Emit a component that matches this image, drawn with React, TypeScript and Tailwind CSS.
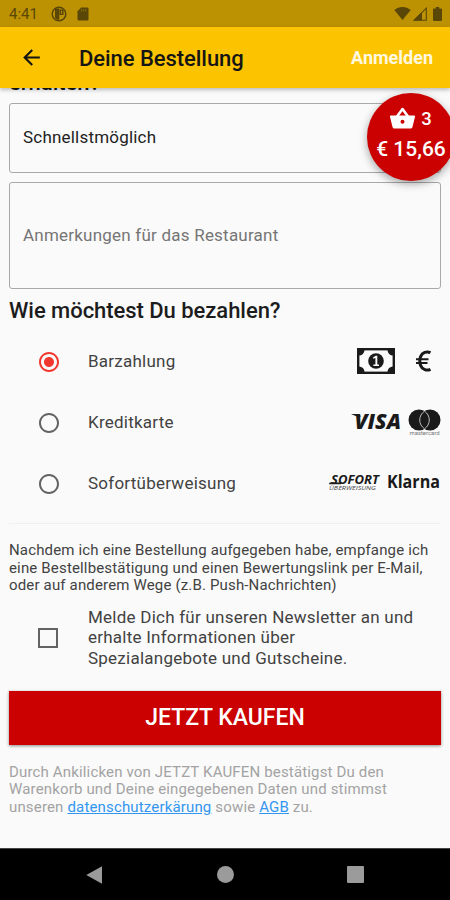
import { useState } from 'react'
import { MdArrowBack, MdRadioButtonChecked, MdRadioButtonUnchecked } from 'react-icons/md'

const PAYMENT_METHODS = [
  { id: 'cash', label: 'Barzahlung', logos: <CashLogos /> },
  { id: 'card', label: 'Kreditkarte', logos: <CardLogos /> },
  { id: 'sofort', label: 'Sofortüberweisung', logos: <SofortLogos /> },
]

function CashLogos() {
  return (
    <div className="-mt-[2px] flex items-center">
      <svg width="38" height="26" viewBox="0 0 38 26" className="mr-[21px]">
        <rect x="1.2" y="1.2" width="35.6" height="23.6" fill="none" stroke="#1a1a1a" strokeWidth="2.4" />
        <path d="M2 2h5.5a5.500 5.500 0 0 1-5.500 5.500zM36 2h-5.500a5.500 5.500 0 0 0 5.500 5.500zM2 24h5.500a5.500 5.500 0 0 0-5.500-5.500zM36 24h-5.500a5.500 5.500 0 0 1 5.500-5.500z" fill="#1a1a1a" />
        <circle cx="19" cy="13" r="7.800" fill="#1a1a1a" />
        <path d="M16.200 9.300l2.600-1.500h1.500v8.800h1.700v1.400h-5.600v-1.400h2v-6.600l-2.200.8z" fill="#fafafa" />
      </svg>
      <svg width="15" height="22" viewBox="0 0 15 22" className="mr-[10px]" fill="none" stroke="#1a1a1a">
        <path d="M14.500 2.800A7 7 0 0 0 4.700 6.400c-1.200 3-1.200 6.200 0 9.200A7 7 0 0 0 14.500 19.200" strokeWidth="3" />
        <path d="M0 9.200h12.500M0 13h11.500" strokeWidth="2" />
      </svg>
    </div>
  )
}

function CardLogos() {
  return (
    <div className="-mt-[2px] flex items-center gap-[5px]">
      <svg width="52" height="32" viewBox="0 0 52 32" fill="#1a1a1a">
        <path d="M0 8h8l2 2.500-3 .5z" />
        <text x="3.500" y="23" fontFamily="Open Sans, sans-serif" fontSize="21" fontWeight="800" fontStyle="italic" textLength="46.500" lengthAdjust="spacingAndGlyphs">
          VISA
        </text>
      </svg>
      <svg width="33" height="30" viewBox="0 0 33 30" className="mt-[3px]">
        <circle cx="11" cy="12" r="10.500" fill="#1a1a1a" />
        <circle cx="22" cy="12" r="10.500" fill="#1a1a1a" />
        <path d="M16.500 3.200a10.500 10.500 0 0 1 0 17.600a10.500 10.500 0 0 1 0-17.600z" fill="none" stroke="#bbb" strokeWidth="1" />
        <text x="1.500" y="26.500" fontFamily="Roboto, sans-serif" fontSize="5" fill="#777" textLength="30" lengthAdjust="spacingAndGlyphs">
          mastercard
        </text>
      </svg>
    </div>
  )
}

function SofortLogos() {
  return (
    <div className="-mt-[2px] flex items-center gap-[6px]">
      <svg width="53" height="26" viewBox="0 0 53 26" fill="#1a1a1a">
        <path d="M1.600 12.600h12l-.6 1.600H1z" />
        <text x="3" y="14.200" fontFamily="Open Sans, sans-serif" fontSize="12.500" fontWeight="700" fontStyle="italic" textLength="48" lengthAdjust="spacingAndGlyphs">
          SOFORT
        </text>
        <text x="1" y="20.300" fontFamily="Open Sans, sans-serif" fontSize="5" fontStyle="italic" fill="#444" textLength="47" lengthAdjust="spacingAndGlyphs">
          ÜBERWEISUNG
        </text>
      </svg>
      <svg width="54" height="34" viewBox="0 0 54 34" fill="#1a1a1a" className="-mt-[4px]">
        <text x="0" y="23.500" fontFamily="Open Sans, sans-serif" fontSize="18.500" fontWeight="700" textLength="53" lengthAdjust="spacingAndGlyphs">
          Klarna
        </text>
      </svg>
    </div>
  )
}

function StatusBar() {
  return (
    <div className="flex h-[27px] items-center justify-between bg-[#bd9202] pl-[9px] pr-[8px] text-[#5a4708]">
      <div className="flex items-center">
        <span className="mt-[2px] w-[42px] text-[15px]">4:41</span>
        <svg width="16" height="16" viewBox="0 0 16 16" className="mr-[10px]">
          <circle cx="8" cy="8" r="6.800" fill="none" stroke="currentColor" strokeWidth="1.500" />
          <path d="M4 2.500h4.300v11.300H6.500L4 12z" fill="currentColor" />
          <path d="M9.200 4.200h2.600v4H9.200z" fill="none" stroke="currentColor" strokeWidth="1.500" />
        </svg>
        <svg width="12" height="14" viewBox="0 0 12 14">
          <path d="M4.200.5h6.300a1 1 0 0 1 1 1v11a1 1 0 0 1-1 1h-9a1 1 0 0 1-1-1V4.200z" fill="currentColor" />
          <path d="M4.600 2.200v2.300M6.700 2.200v2.300M8.800 2.200v2.300" stroke="#bd9202" strokeWidth=".5" />
        </svg>
      </div>
      <div className="flex items-center">
        <svg width="17" height="14" viewBox="0 0 17 14" className="mr-[2px]">
          <path d="M8.500 13.500L.3 3.400a13 13 0 0 1 16.400 0z" fill="currentColor" transform="translate(0 -.5)" />
        </svg>
        <svg width="14" height="14" viewBox="0 0 14 14" className="mr-[6px]">
          <path d="M13.300 1.200v12H1z" fill="none" stroke="currentColor" strokeWidth="1.100" />
          <path d="M.3 13.600L9 5v8.600z" fill="currentColor" />
        </svg>
        <svg width="9" height="14" viewBox="0 0 9 14">
          <path d="M2.800 0h3.400v1.600H8a1 1 0 0 1 1 1V13a1 1 0 0 1-1 1H1a1 1 0 0 1-1-1V2.600a1 1 0 0 1 1-1h1.800z" fill="currentColor" />
        </svg>
      </div>
    </div>
  )
}

function NavigationBar() {
  return (
    <div className="flex h-[52px] items-center border-t border-[#444] bg-black pl-[86px] text-[#9b9b9b]">
      <svg width="16" height="18" viewBox="0 0 16 18">
        <path d="M16 .3v17.400L.3 9z" fill="currentColor" />
      </svg>
      <div className="ml-[115px] size-[17px] rounded-full bg-[#9b9b9b]" />
      <div className="ml-[113px] size-[17px] rounded-[1px] bg-[#9b9b9b]" />
    </div>
  )
}

export default function App() {
  const [payment, setPayment] = useState('cash')
  const [newsletter, setNewsletter] = useState(false)

  return (
    <div className="relative flex h-[900px] w-[450px] flex-col overflow-hidden bg-[#fafafa] font-[Roboto,sans-serif] text-[#222]">
      <StatusBar />

      <header className="z-10 flex h-[61px] items-center bg-[#fcc400] pl-[19px] pr-[17px] shadow-[0_2px_4px_rgba(0,0,0,0.25)]">
        <MdArrowBack className="size-[25px] text-[#151515]" />
        <h1 className="mt-[2px] ml-[35px] flex-1 text-[22px] font-medium tracking-[-0.05px] text-[#151515]">Deine Bestellung</h1>
        <button className="text-[18px] font-bold text-[#fff8e0]">Anmelden</button>
      </header>

      <main className="flex flex-1 flex-col overflow-hidden px-[9px] whitespace-nowrap">
        <h2 className="-mt-[18px] mb-[7px] h-[26px] shrink-0 text-[22px] leading-[26px] font-medium text-[#151515]">erhalten?</h2>

        <div className="flex h-[70px] items-center rounded-[3px] border border-[#a9a9a9] px-[13px] pb-px text-[17px] tracking-[0.2px]">
          Schnellstmöglich
        </div>
        <div className="mt-[9px] flex h-[107px] items-center rounded-[3px] border border-[#a9a9a9] px-[13px] text-[17px] tracking-[0.22px] text-[#757575]">
          Anmerkungen für das Restaurant
        </div>

        <h2 className="mt-[8px] text-[22px] leading-[27px] font-medium tracking-[-0.04px] text-[#1c1c1c]">Wie möchtest Du bezahlen?</h2>

        <div className="mt-[7px]">
          {PAYMENT_METHODS.map((m) => (
            <div className="flex h-[61px] items-center pl-[28px]" key={m.id} onClick={() => setPayment(m.id)}>
              {payment === m.id ? (
                <MdRadioButtonChecked className="size-[24px] text-[#f2382e]" />
              ) : (
                <MdRadioButtonUnchecked className="size-[24px] text-[#636363]" />
              )}
              <span className="ml-[27px] flex-1 text-[17px] tracking-[0.24px] text-[#424242]">{m.label}</span>
              {m.logos}
            </div>
          ))}
        </div>

        <div className="mt-[9px] h-px shrink-0 bg-[#f0f0f0]" />

        <p className="mt-[18px] text-[15px] leading-[17.6px] tracking-[0.16px] text-[#424242]">
          Nachdem ich eine Bestellung aufgegeben habe, empfange ich
          <br />
          eine Bestellbestätigung und einen Bewertungslink per E-Mail,
          <br />
          oder auf anderem Wege (z.B. Push-Nachrichten)
        </p>

        <div className="mt-[12px] flex items-center pl-[29px]" onClick={() => setNewsletter(!newsletter)}>
          <div className="flex size-[20px] items-center justify-center border-2 border-[#636363]">
            {newsletter && <div className="size-[12px] bg-[#f2382e]" />}
          </div>
          <p className="ml-[30px] text-[17px] leading-[20.7px] tracking-[0.24px] text-[#424242]">
            Melde Dich für unseren Newsletter an und
            <br />
            erhalte Informationen über
            <br />
            Spezialangebote und Gutscheine.
          </p>
        </div>

        <button className="mt-[22px] h-[54px] shrink-0 bg-[#cb0000] text-[23px] font-medium text-white shadow-[0_1px_3px_rgba(0,0,0,0.45)]">
          JETZT KAUFEN
        </button>

        <p className="mt-[19px] text-[15px] leading-[17.6px] tracking-[0.16px] text-[#a3a3a3]">
          Durch Ankilicken von JETZT KAUFEN bestätigst Du den
          <br />
          Warenkorb und Deine eingegebenen Daten und stimmst
          <br />
          unseren <a className="text-[#3296f0] underline">datenschutzerkärung</a> sowie <a className="text-[#3296f0] underline">AGB</a> zu.
        </p>
      </main>

      <NavigationBar />

      {/* Basket bubble floats over the form and runs off the right edge */}
      <div className="absolute top-[93px] left-[367px] z-20 flex size-[88px] flex-col items-center rounded-full bg-[#cb0000] pt-[13px] text-white shadow-[0_3px_8px_rgba(0,0,0,0.35)]">
        <div className="flex h-[28px] items-center gap-[6px]">
          <svg width="25" height="22" viewBox="0 0 25 22" className="-mt-[4px]">
            <path d="M7 9.500l5.500-7.500L18 9.500" fill="none" stroke="currentColor" strokeWidth="2.600" strokeLinejoin="round" />
            <path d="M1 8.500h23a1 1 0 0 1 1 1.300L22.500 20a2 2 0 0 1-2 1.500h-16a2 2 0 0 1-2-1.500L0 9.800a1 1 0 0 1 1-1.300z" fill="currentColor" />
            <circle cx="12.500" cy="14.800" r="2" fill="#cb0000" />
          </svg>
          <span className="text-[18.500px] font-medium">3</span>
        </div>
        <span className="text-[21px] leading-[30px] font-medium whitespace-nowrap">€ 15,66</span>
      </div>
    </div>
  )
}
